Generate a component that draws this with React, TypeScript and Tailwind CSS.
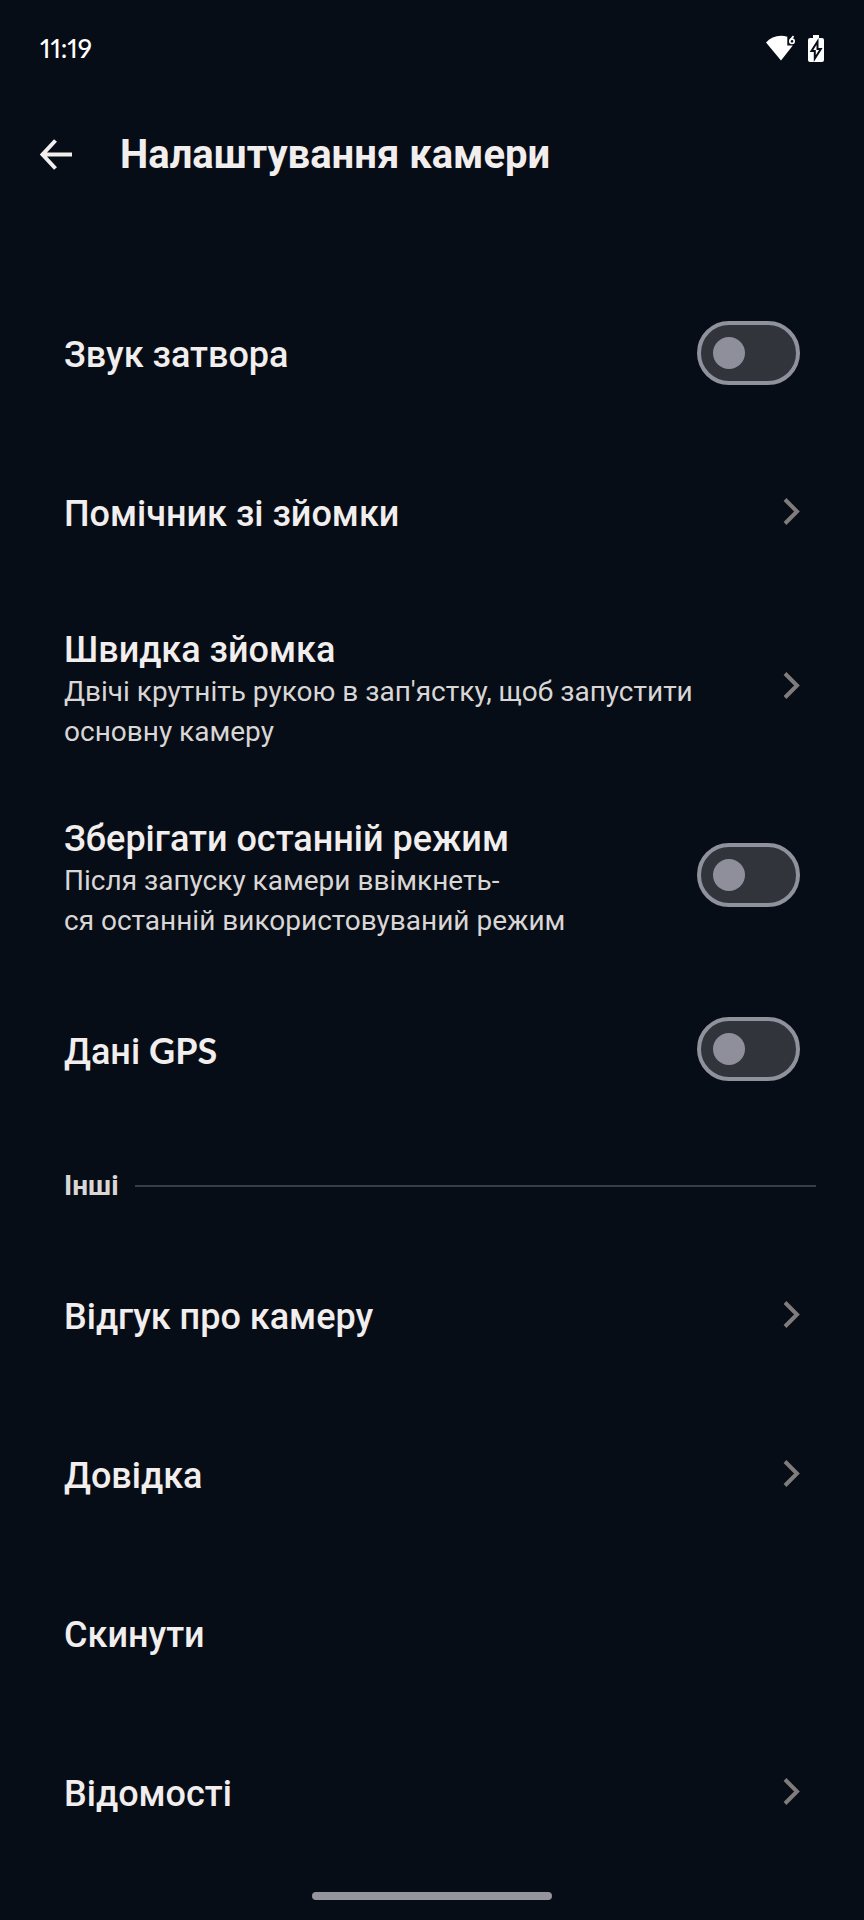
import type { ReactNode } from "react";

type Item = {
  id: string;
  title: ReactNode;
  lines?: string[];
  kind: "switch" | "link" | "plain";
};

const cameraItems: Item[] = [
  { id: "shutter", title: "Звук затвора", kind: "switch" },
  { id: "assistant", title: "Помічник зі зйомки", kind: "link" },
  {
    id: "quick",
    title: "Швидка зйомка",
    lines: ["Двічі крутніть рукою в зап'ястку, щоб запустити", "основну камеру"],
    kind: "link",
  },
  {
    id: "mode",
    title: "Зберігати останній режим",
    lines: ["Після запуску камери ввімкнеть-", "ся останній використовуваний режим"],
    kind: "switch",
  },
  {
    id: "gps",
    title: (
      <>
        Дані <span className="font-['Lato',sans-serif] font-bold">GPS</span>
      </>
    ),
    kind: "switch",
  },
];

const otherItems: Item[] = [
  { id: "feedback", title: "Відгук про камеру", kind: "link" },
  { id: "help", title: "Довідка", kind: "link" },
  { id: "reset", title: "Скинути", kind: "plain" },
  { id: "about", title: "Відомості", kind: "link" },
];

function Chevron() {
  return (
    <svg className="w-[17px] h-[27px] shrink-0" viewBox="0 0 17 27" fill="none" aria-hidden="true">
      <path d="M2 1.5 14 13.5 2 25.5" stroke="#7f7c7b" strokeWidth="4" />
    </svg>
  );
}

function Switch({ id }: { id: string }) {
  return (
    <input
      id={id}
      type="checkbox"
      role="switch"
      className="appearance-none shrink-0 w-[103px] h-16 rounded-full border-4 border-[#8f919d] bg-[#31343a] flex items-center px-3 cursor-pointer before:content-[''] before:block before:size-8 before:rounded-full before:bg-[#8f8f9b] checked:justify-end"
    />
  );
}

function ItemText({ title, lines }: Pick<Item, "title" | "lines">) {
  return (
    <span className={lines ? "block pt-2" : "block pt-1"}>
      <span className="block text-[36px] leading-[44px] font-medium text-[#f1eeed]">{title}</span>
      {lines?.map((line) => (
        <span key={line} className="block text-[28px] leading-[40px] text-[#d9d6d5]">
          {line}
        </span>
      ))}
    </span>
  );
}

function Row({ item }: { item: Item }) {
  const height = item.lines ? "min-h-[189px]" : "min-h-[159px]";
  const shared = `w-full flex items-center justify-between gap-6 px-16 text-left ${height}`;

  if (item.kind === "switch") {
    return (
      <li>
        <div className={shared}>
          <label htmlFor={item.id} className="cursor-pointer">
            <ItemText title={item.title} lines={item.lines} />
          </label>
          <Switch id={item.id} />
        </div>
      </li>
    );
  }

  return (
    <li>
      <button type="button" className={shared}>
        <ItemText title={item.title} lines={item.lines} />
        {item.kind === "link" && <Chevron />}
      </button>
    </li>
  );
}

function StatusBar() {
  return (
    <div className="flex items-center justify-between h-24 px-10 text-white">
      <span className="font-['Lato',sans-serif] text-[26px] leading-8 font-medium proportional-nums">11:19</span>
      <div className="flex items-center gap-3">
        {/* Wi-Fi 6 */}
        <svg className="w-[30px] h-[26px]" viewBox="0 0 30 26" fill="none" aria-hidden="true">
          <path d="M0 7.5C4 3 9 .8 15 .8c2.200 0 4.300.3 6.300 1v8.700h5.500L15 25.500Z" fill="currentColor" />
          <path d="M27.500 1.200 24.300 5" stroke="currentColor" strokeWidth="1.800" />
          <circle cx="26" cy="6.300" r="2.200" stroke="currentColor" strokeWidth="1.700" />
        </svg>
        {/* Battery, charging */}
        <svg className="w-4 h-[27px]" viewBox="0 0 16 27" aria-hidden="true">
          <path
            d="M5 0h6v3h3a2 2 0 0 1 2 2v20a2 2 0 0 1-2 2H2a2 2 0 0 1-2-2V5a2 2 0 0 1 2-2h3Z"
            fill="currentColor"
          />
          <path d="M9.500 6.500 3.500 16h3.300v7.500L12.800 14H9.500Z" fill="#fff" stroke="#060d17" strokeWidth="2" />
        </svg>
      </div>
    </div>
  );
}

export default function App() {
  return (
    <div className="min-h-screen bg-[#060d17] font-['Roboto',sans-serif] flex flex-col">
      <StatusBar />

      <header className="flex items-center gap-12 h-[118px] px-10">
        <button type="button" aria-label="Назад" className="text-[#f1eeed]">
          <svg className="size-8" viewBox="0 0 32 32" fill="none" aria-hidden="true">
            <path
              d="M15.500 1.500 2.500 15.500l13 14M3 15.500h29.500"
              stroke="currentColor"
              strokeWidth="4"
            />
          </svg>
        </button>
        <h1 className="text-[40px] leading-[48px] font-bold text-[#f1eeed]">Налаштування камери</h1>
      </header>

      <main className="pt-[59px]">
        <ul>
          {cameraItems.map((item) => (
            <Row key={item.id} item={item} />
          ))}
        </ul>

        <div className="flex items-center gap-4 h-[107px] pt-2 pl-16 pr-12">
          <h2 className="text-[28px] leading-8 font-bold text-[#d9d6d5]">Інші</h2>
          <div className="flex-1 h-0.5 bg-[#383c43]" />
        </div>

        <ul>
          {otherItems.map((item) => (
            <Row key={item.id} item={item} />
          ))}
        </ul>
      </main>

      <div className="flex justify-center pt-[21px] pb-5">
        <div className="w-60 h-2 rounded-full bg-[#93949c]" />
      </div>
    </div>
  );
}
